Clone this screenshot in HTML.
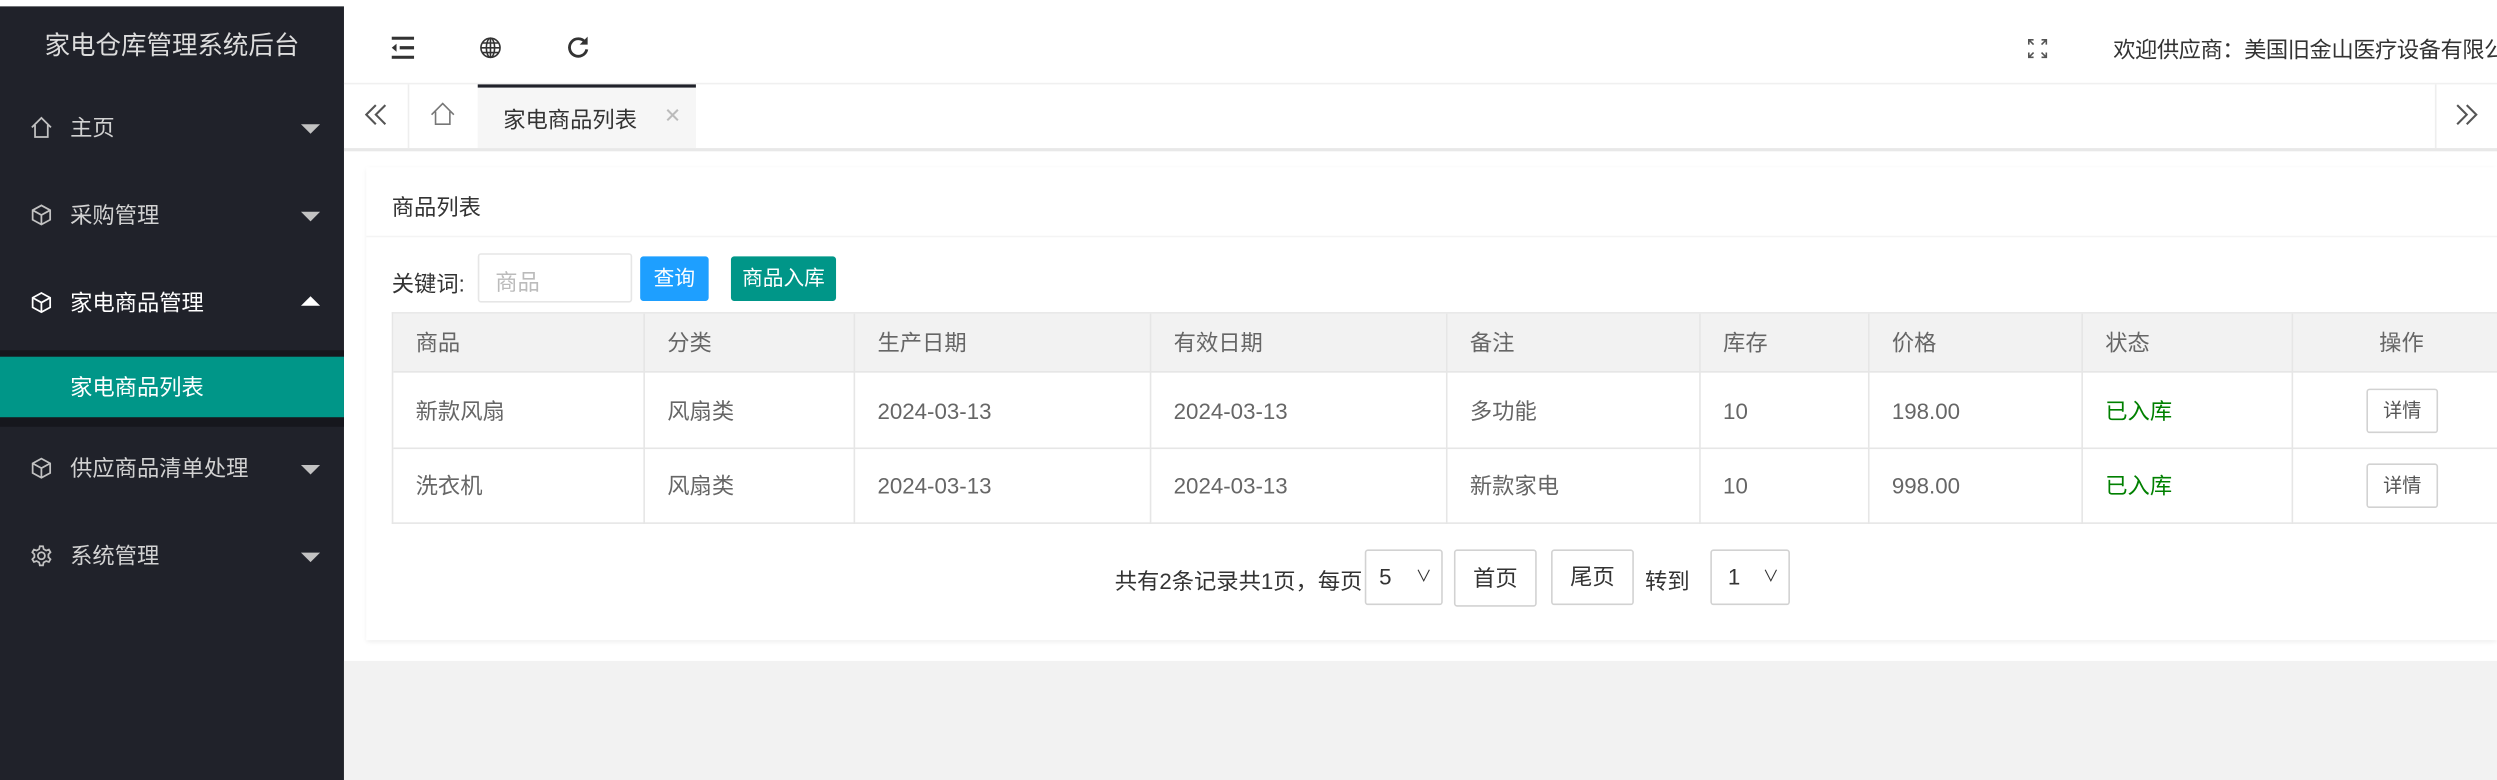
<!DOCTYPE html>
<html><head><meta charset="utf-8"><style>
*{margin:0;padding:0;box-sizing:border-box}
html,body{width:2497px;height:780px;overflow:hidden;background:#fff}
#w{width:1568px;height:490px;transform:scale(1.59247);transform-origin:0 0;position:relative;font-family:"Liberation Sans","Noto Sans CJK SC",sans-serif;font-size:14px;color:#333}
.a{position:absolute}
.side{left:0;top:4px;width:216px;height:486px;background:#20222a}
.logo{left:0;top:0;width:216px;height:52px;line-height:52px;text-align:center;color:#ddd;font-size:16px}
.mi{left:0;width:216px;height:40px;line-height:40px;color:#d2d2d2;font-size:14px}
.mi span{position:absolute;left:44px}
.mi svg{position:absolute;left:19px;top:13px}
.tri{position:absolute;left:189px;top:18px;width:0;height:0;border-left:6px solid transparent;border-right:6px solid transparent;border-top:6px solid #c2c2c2}
.up{border-top:0;border-bottom:6px solid #fff;top:16px}
.cell{position:absolute;color:#666;line-height:1}
.btn{position:absolute;border:1px solid #d2d2d2;background:#fff;border-radius:2px;text-align:center;color:#333}
</style></head><body><div id="w">
<div class="a side">
 <div class="a logo">家电仓库管理系统后台</div>
 <div class="a mi" style="top:56px"><svg width="14" height="14" viewBox="0 0 14 14" fill="none" stroke="#c2c2c2" stroke-width="1.1"><path d="M1 7L7 1l6 6M3 5.5V13h8V5.5"/></svg><span>主页</span><i class="tri"></i></div>
 <div class="a mi" style="top:111px"><svg width="14" height="14" viewBox="0 0 14 14" fill="none" stroke="#c2c2c2" stroke-width="1.1"><path d="M7 1l5.5 3v6L7 13 1.5 10V4zM1.5 4L7 7l5.5-3M7 7v6"/></svg><span>采购管理</span><i class="tri"></i></div>
 <div class="a mi" style="top:166px;color:#fff"><svg width="14" height="14" viewBox="0 0 14 14" fill="none" stroke="#fff" stroke-width="1.1"><path d="M7 1l5.5 3v6L7 13 1.5 10V4zM1.5 4L7 7l5.5-3M7 7v6"/></svg><span>家电商品管理</span><i class="tri up"></i></div>
 <div class="a" style="left:0;top:216px;width:216px;height:48px;background:#16171d"></div>
 <div class="a mi" style="top:220px;height:38px;line-height:38px;background:#009688;color:#fff"><span>家电商品列表</span></div>
 <div class="a mi" style="top:270px"><svg width="14" height="14" viewBox="0 0 14 14" fill="none" stroke="#c2c2c2" stroke-width="1.1"><path d="M7 1l5.5 3v6L7 13 1.5 10V4zM1.5 4L7 7l5.5-3M7 7v6"/></svg><span>供应商品清单处理</span><i class="tri"></i></div>
 <div class="a mi" style="top:325px"><svg width="14" height="14" viewBox="0 0 14 14" fill="none" stroke="#c2c2c2" stroke-width="1.1"><circle cx="7" cy="7" r="2.2"/><path d="M6 1h2l.4 1.8 1.6.9 1.7-.6 1 1.7-1.3 1.3v1.8l1.3 1.3-1 1.7-1.7-.6-1.6.9L8 13H6l-.4-1.8-1.6-.9-1.7.6-1-1.7 1.3-1.3V6.1L1.3 4.8l1-1.7 1.7.6 1.6-.9z"/></svg><span>系统管理</span><i class="tri"></i></div>
</div>
<!-- header -->
<svg class="a" style="left:245px;top:23px" width="16" height="14" viewBox="0 0 16 14"><path d="M1 1h14M6 7h9M1 13h14" stroke="#333" stroke-width="2"/><path d="M1 7l3-2.5v5z" fill="#333"/></svg>
<svg class="a" style="left:301px;top:23px" width="14" height="14" viewBox="0 0 14 14" fill="none" stroke="#333" stroke-width="1"><circle cx="7" cy="7" r="6"/><ellipse cx="7" cy="7" rx="2.6" ry="6"/><path d="M1 7h12M2 4h10M2 10h10M7 1v12"/></svg>
<svg class="a" style="left:356px;top:22px" width="14" height="15" viewBox="0 0 14 15" fill="none"><path d="M11.5 4.5A5.5 5.5 0 1 0 12.5 9" stroke="#333" stroke-width="1.8"/><path d="M13 1v5H8z" fill="#333"/></svg>
<svg class="a" style="left:1273px;top:24px" width="13" height="13" viewBox="0 0 13 13" fill="none" stroke="#555" stroke-width="1"><path d="M1 4V1h3M1 1l3 3M9 1h3v3M12 1L9 4M1 9v3h3M1 12l3-3M12 9v3H9M12 12L9 9"/></svg>
<div class="a" style="left:1327px;top:21px;font-size:14px;color:#333;white-space:nowrap;letter-spacing:-0.3px">欢迎供应商：美国旧金山医疗设备有限公司</div>
<!-- tabs -->
<div class="a" style="left:216px;top:52px;width:1352px;height:1px;background:#f0f0f0"></div>
<div class="a" style="left:216px;top:93px;width:1352px;height:2px;background:#e8e8e8"></div>
<div class="a" style="left:256px;top:53px;width:1px;height:40px;background:#eee"></div>
<div class="a" style="left:1529px;top:53px;width:1px;height:40px;background:#eee"></div>
<svg class="a" style="left:229px;top:65px" width="14" height="14" viewBox="0 0 14 14" fill="none" stroke="#555" stroke-width="1.3"><path d="M7 1L1 7l6 6M13 1L7 7l6 6"/></svg>
<svg class="a" style="left:1542px;top:65px" width="14" height="14" viewBox="0 0 14 14" fill="none" stroke="#555" stroke-width="1.3"><path d="M1 1l6 6-6 6M7 1l6 6-6 6"/></svg>
<svg class="a" style="left:270px;top:64px" width="16" height="15" viewBox="0 0 16 15" fill="none" stroke="#777" stroke-width="1"><path d="M1 8L8 1l7 7M3.5 6v8h9V6"/></svg>
<div class="a" style="left:300px;top:53px;width:137px;height:40px;background:#f6f6f6;border-top:2px solid #20222a"></div>
<div class="a" style="left:316px;top:65px;color:#333">家电商品列表</div>
<div class="a" style="left:417px;top:65px;color:#bbb;font-size:13px">✕</div>
<!-- content -->
<div class="a" style="left:216px;top:415px;width:1352px;height:75px;background:#f2f2f2"></div>
<div class="a" style="left:230px;top:105px;width:1338px;height:297px;box-shadow:0 1px 3px rgba(0,0,0,.08);background:#fff"></div>
<div class="a" style="left:246px;top:120px">商品列表</div>
<div class="a" style="left:230px;top:148px;width:1338px;height:1px;background:#f4f4f4"></div>
<div class="a" style="left:246px;top:168px">关键词:</div>
<div class="a" style="left:300px;top:159px;width:97px;height:31px;border:1px solid #e6e6e6;border-radius:2px;color:#bbb;padding:7px 10px">商品</div>
<div class="a" style="left:402px;top:161px;width:43px;height:28px;background:#1e9fff;color:#fff;font-size:13px;line-height:28px;text-align:center;border-radius:2px">查询</div>
<div class="a" style="left:459px;top:161px;width:66px;height:28px;background:#009688;color:#fff;font-size:13px;line-height:28px;text-align:center;border-radius:2px">商品入库</div>
<!-- table -->
<div class="a" style="left:246px;top:196px;width:1322px;height:133px;border:1px solid #e6e6e6;border-right:0"></div>
<div class="a" style="left:247px;top:197px;width:1321px;height:37px;background:#f2f2f2;border-bottom:1px solid #e6e6e6"></div>
<div class="a" style="left:247px;top:281px;width:1321px;height:1px;background:#e6e6e6"></div>
<div class="a" style="left:404px;top:197px;width:1px;height:132px;background:#e6e6e6"></div>
<div class="a" style="left:536px;top:197px;width:1px;height:132px;background:#e6e6e6"></div>
<div class="a" style="left:722px;top:197px;width:1px;height:132px;background:#e6e6e6"></div>
<div class="a" style="left:908px;top:197px;width:1px;height:132px;background:#e6e6e6"></div>
<div class="a" style="left:1067px;top:197px;width:1px;height:132px;background:#e6e6e6"></div>
<div class="a" style="left:1173px;top:197px;width:1px;height:132px;background:#e6e6e6"></div>
<div class="a" style="left:1307px;top:197px;width:1px;height:132px;background:#e6e6e6"></div>
<div class="a" style="left:1439px;top:197px;width:1px;height:132px;background:#e6e6e6"></div>
<div class="cell" style="left:261px;top:208px">商品</div><div class="cell" style="left:419px;top:208px">分类</div><div class="cell" style="left:551px;top:208px">生产日期</div><div class="cell" style="left:737px;top:208px">有效日期</div><div class="cell" style="left:923px;top:208px">备注</div><div class="cell" style="left:1082px;top:208px">库存</div><div class="cell" style="left:1188px;top:208px">价格</div><div class="cell" style="left:1322px;top:208px">状态</div><div class="cell" style="left:1494px;top:208px">操作</div>
<div class="cell" style="left:261px;top:251px">新款风扇</div><div class="cell" style="left:419px;top:251px">风扇类</div><div class="cell" style="left:551px;top:251px">2024-03-13</div><div class="cell" style="left:737px;top:251px">2024-03-13</div><div class="cell" style="left:923px;top:251px">多功能</div><div class="cell" style="left:1082px;top:251px">10</div><div class="cell" style="left:1188px;top:251px">198.00</div><div class="cell" style="left:1322px;top:251px;color:#008000">已入库</div>
<div class="btn" style="left:1486px;top:244px;width:45px;height:28px;line-height:26px;font-size:12px;color:#555">详情</div>
<div class="cell" style="left:261px;top:298px">洗衣机</div><div class="cell" style="left:419px;top:298px">风扇类</div><div class="cell" style="left:551px;top:298px">2024-03-13</div><div class="cell" style="left:737px;top:298px">2024-03-13</div><div class="cell" style="left:923px;top:298px">新款家电</div><div class="cell" style="left:1082px;top:298px">10</div><div class="cell" style="left:1188px;top:298px">998.00</div><div class="cell" style="left:1322px;top:298px;color:#008000">已入库</div>
<div class="btn" style="left:1486px;top:291px;width:45px;height:28px;line-height:26px;font-size:12px;color:#555">详情</div>
<!-- pagination -->
<div class="a" style="left:700px;top:355px;color:#333">共有2条记录共1页，每页</div>
<div class="btn" style="left:857px;top:345px;width:49px;height:35px;line-height:33px;text-align:left;padding-left:8px">5<span style="position:absolute;right:6px;font-size:10px">∨</span></div>
<div class="btn" style="left:913px;top:345px;width:52px;height:36px;line-height:34px">首页</div>
<div class="btn" style="left:974px;top:345px;width:52px;height:35px;line-height:33px">尾页</div>
<div class="a" style="left:1033px;top:355px">转到</div>
<div class="btn" style="left:1074px;top:345px;width:50px;height:35px;line-height:33px;text-align:left;padding-left:10px">1<span style="position:absolute;right:6px;font-size:10px">∨</span></div>
</div></body></html>
